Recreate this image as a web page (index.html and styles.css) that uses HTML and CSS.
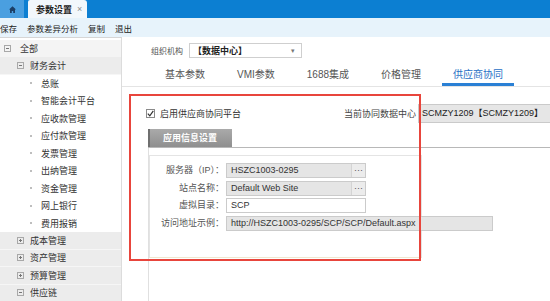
FILE: index.html
```html
<!DOCTYPE html>
<html>
<head>
<meta charset="utf-8">
<link rel="stylesheet" href="styles.css">
</head>
<body>
<div class="app">
  <header class="tabbar">
    <div class="home-tab">
      <svg width="7" height="7" viewBox="0 0 7 7"><path d="M3.5 0.3 L7 3.6 H6 V7 H4.2 V5 H2.8 V7 H1 V3.6 H0 Z" fill="#1c3f66"/></svg>
    </div>
    <div class="doc-tab">参数设置<span class="close">×</span></div>
  </header>
  <nav class="toolbar">
    <span>保存</span><span>参数差异分析</span><span>复制</span><span>退出</span>
  </nav>
  <div class="layout">
    <aside class="sidebar">
      <div class="row root"><svg class="tog" viewBox="0 0 7 7"><rect x=".5" y=".5" width="6" height="6" fill="none" stroke="#a8a8a8"/><path d="M2 3.5h3" stroke="#777"/></svg><span>全部</span></div>
      <div class="row branch"><svg class="tog" viewBox="0 0 7 7"><rect x=".5" y=".5" width="6" height="6" fill="none" stroke="#a8a8a8"/><path d="M2 3.5h3" stroke="#777"/></svg><span>财务会计</span></div>
      <div class="row leaf"><i class="dot"></i><span>总账</span></div>
      <div class="row leaf"><i class="dot"></i><span>智能会计平台</span></div>
      <div class="row leaf"><i class="dot"></i><span>应收款管理</span></div>
      <div class="row leaf"><i class="dot"></i><span>应付款管理</span></div>
      <div class="row leaf"><i class="dot"></i><span>发票管理</span></div>
      <div class="row leaf"><i class="dot"></i><span>出纳管理</span></div>
      <div class="row leaf"><i class="dot"></i><span>资金管理</span></div>
      <div class="row leaf"><i class="dot"></i><span>网上银行</span></div>
      <div class="row leaf"><i class="dot"></i><span>费用报销</span></div>
      <div class="row branch"><svg class="tog" viewBox="0 0 7 7"><rect x=".5" y=".5" width="6" height="6" fill="none" stroke="#a8a8a8"/><path d="M2 3.5h3M3.5 2v3" stroke="#777"/></svg><span>成本管理</span></div>
      <div class="row branch"><svg class="tog" viewBox="0 0 7 7"><rect x=".5" y=".5" width="6" height="6" fill="none" stroke="#a8a8a8"/><path d="M2 3.5h3M3.5 2v3" stroke="#777"/></svg><span>资产管理</span></div>
      <div class="row branch"><svg class="tog" viewBox="0 0 7 7"><rect x=".5" y=".5" width="6" height="6" fill="none" stroke="#a8a8a8"/><path d="M2 3.5h3M3.5 2v3" stroke="#777"/></svg><span>预算管理</span></div>
      <div class="row branch"><svg class="tog" viewBox="0 0 7 7"><rect x=".5" y=".5" width="6" height="6" fill="none" stroke="#a8a8a8"/><path d="M2 3.5h3" stroke="#777"/></svg><span>供应链</span></div>
    </aside>
    <main class="main">
      <div class="org-row">
        <span class="org-label">组织机构</span>
        <div class="select"><span class="select-text">【数据中心】</span><span class="caret">▾</span></div>
      </div>
      <div class="tabs">
        <span class="tab">基本参数</span>
        <span class="tab">VMI参数</span>
        <span class="tab">1688集成</span>
        <span class="tab">价格管理</span>
        <span class="tab active">供应商协同</span>
      </div>
      <div class="enable-row">
        <label class="check-label">
          <span class="checkbox"><svg width="7" height="7" viewBox="0 0 7 7"><path d="M0.8 3.6 L2.8 5.8 L6.3 0.8" fill="none" stroke="#333" stroke-width="1.2"/></svg></span>
          <span>启用供应商协同平台</span>
        </label>
        <span class="cur-label">当前协同数据中心</span>
        <div class="cur-input">SCMZY1209【SCMZY1209】</div>
      </div>
      <section class="settings">
        <div class="settings-head"><span class="settings-tab">应用信息设置</span></div>
        <div class="settings-body">
          <div class="fieldset">
            <div class="frow"><span class="flabel">服务器（IP）：</span><div class="field"><span class="fval">HSZC1003-0295</span><span class="more">···</span></div></div>
            <div class="frow"><span class="flabel">站点名称：</span><div class="field"><span class="fval">Default Web Site</span><span class="more">···</span></div></div>
            <div class="frow"><span class="flabel">虚拟目录：</span><div class="field white"><span class="fval">SCP</span></div></div>
            <div class="frow"><span class="flabel">访问地址示例：</span><div class="field wide"><span class="fval">http://HSZC1003-0295/SCP/SCP/Default.aspx</span></div></div>
          </div>
        </div>
      </section>
      <div class="annotation"></div>
    </main>
  </div>
</div>
</body>
</html>
```

FILE: styles.css
```css
* { box-sizing: border-box; }
html, body { margin: 0; padding: 0; }
body {
  width: 550px;
  height: 301px;
  overflow: hidden;
  background: #fff;
  font-family: "Liberation Sans", "Noto Sans CJK SC", sans-serif;
  font-size: 9px;
  color: #333;
}
.app { display: flex; flex-direction: column; height: 301px; }

.tabbar {
  flex: none;
  height: 18px;
  background: #0c7fd2;
  display: flex;
  align-items: flex-end;
}
.home-tab {
  width: 24px;
  height: 18px;
  background: #4a9fe0;
  display: flex;
  align-items: center;
  justify-content: center;
  margin-right: 4px;
}
.doc-tab {
  width: 59px;
  height: 18px;
  background: #f2f7fb;
  border-radius: 2px 3px 0 0;
  display: flex;
  align-items: center;
  padding-left: 8px;
  font-weight: bold;
  color: #222;
}
.doc-tab .close { color: #8a8a8a; font-weight: normal; margin-left: 5px; }

.toolbar {
  flex: none;
  height: 19px;
  background: #e7f3fb;
  display: flex;
  align-items: center;
  gap: 10px;
  font-size: 8.5px;
  color: #222;
}

.layout { flex: 1; display: flex; min-height: 0; }

.sidebar {
  flex: none;
  width: 122px;
  border-right: 1px solid #dcdcdc;
  border-top: 1px solid #d6d6d6;
  padding-top: 1.5px;
  overflow: hidden;
}
.row { height: 17.5px; display: flex; align-items: center; color: #333; white-space: nowrap; }
.row.root { background: #f4f4f4; padding-left: 4px; gap: 9px; }
.row.branch { background: #ececec; padding-left: 17px; gap: 6px; border-bottom: 1px solid #f6f6f6; }
.row.leaf { padding-left: 30px; gap: 9px; }
.tog { width: 7px; height: 7px; flex: none; }
.dot { width: 2px; height: 2px; border-radius: 50%; background: #a8a8a8; flex: none; }

.main {
  flex: 1;
  position: relative;
  display: flex;
  flex-direction: column;
  overflow: hidden;
  min-width: 0;
}

.org-row {
  margin-top: 6px;
  padding-left: 29px;
  height: 15px;
  display: flex;
  align-items: center;
}
.org-label { width: 38px; flex: none; font-size: 8px; color: #555; }
.select {
  width: 113px;
  height: 15px;
  border: 1px solid #cfcfcf;
  display: flex;
  align-items: center;
  padding-left: 3px;
}
.select-text { font-weight: bold; color: #222; flex: 1; }
.caret { color: #777; font-size: 7px; margin-right: 6px; }

.tabs {
  margin-top: 9px;
  padding-left: 27px;
  display: flex;
  border-bottom: 1px solid #e4e4e4;
}
.tab {
  margin: 0 5px;
  padding: 0 11px;
  line-height: 16px;
  font-size: 10px;
  color: #555;
  border-bottom: 3px solid transparent;
  white-space: nowrap;
}
.tab.active { color: #1f6fc5; border-bottom-color: #2a80d5; }

.enable-row {
  margin-top: 17px;
  height: 19px;
  padding-left: 24px;
  display: grid;
  grid-template-columns: 198px 74px 150px;
  align-items: center;
}
.check-label { display: flex; align-items: center; gap: 5px; color: #333; }
.checkbox {
  width: 9px;
  height: 9px;
  border: 1px solid #8a8a8a;
  background: #fff;
  display: flex;
  align-items: center;
  justify-content: center;
}
.cur-label { color: #444; white-space: nowrap; }
.cur-input {
  height: 19px;
  line-height: 17px;
  background: #e6e6e6;
  border: 1px solid #cacaca;
  padding-left: 3px;
  color: #222;
  white-space: nowrap;
}

.settings {
  flex: 1;
  margin-top: 6px;
  margin-left: 26px;
  display: flex;
  flex-direction: column;
}
.settings-head {
  display: flex;
  border-bottom: 1px solid #b8b8b8;
}
.settings-tab {
  height: 18px;
  line-height: 18px;
  padding: 0 15px 0 13px;
  background: linear-gradient(#aaaaaa, #8f8f8f);
  border-left: 2px solid #6f6f6f;
  color: #fff;
  font-weight: bold;
}
.settings-body {
  flex: 1;
  border-left: 1px solid #e0e0e0;
  padding-top: 7px;
}
.fieldset {
  width: 273px;
  height: 103px;
  border: 1px solid #e4e4e4;
  border-bottom-color: #efe7cf;
  padding-top: 7px;
}
.frow { height: 17.5px; display: flex; align-items: flex-start; }
.flabel {
  flex: none;
  width: 74px;
  line-height: 15px;
  text-align: right;
  color: #555;
  white-space: nowrap;
}
.field {
  margin-left: 2px;
  width: 140px;
  height: 15px;
  border: 1px solid #cbcbcb;
  background: #e5e5e5;
  display: flex;
  flex: none;
}
.field.white { background: #fff; }
.field.wide { width: 267px; }
.fval { flex: 1; padding-left: 4px; line-height: 13px; color: #333; white-space: nowrap; overflow: hidden; }
.more {
  width: 14px;
  line-height: 12px;
  text-align: center;
  color: #555;
  background: #ececec;
  border-left: 1px solid #d4d4d4;
}

.annotation {
  position: absolute;
  left: 7px;
  top: 57px;
  width: 292px;
  height: 167px;
  border: 2px solid #e8453c;
  pointer-events: none;
}
```
